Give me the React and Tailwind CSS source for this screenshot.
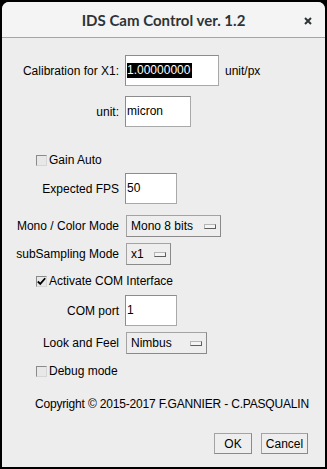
import React from "react";

const FONT = { fontFamily: '"Liberation Sans", Arial, sans-serif' };

function Field({ value, width, selected }) {
  return (
    <div
      className="h-[31px] bg-white border border-[#a9a9a9] border-t-[#8c8c8c] border-l-[#8c8c8c] flex items-center pl-[1px]"
      style={{ width }}
    >
      {selected ? (
        <span className="bg-black text-white leading-[15px] pr-[2px]">{value}</span>
      ) : (
        <span className="leading-[15px]">{value}</span>
      )}
    </div>
  );
}

function Combo({ value, width }) {
  return (
    <div
      className="h-[22px] bg-[#eeeeee] border border-[#a3a3a3] border-b-[#8a8a8a] border-r-[#8a8a8a] flex items-center justify-between pl-[4px] pr-[4px]"
      style={{ width }}
    >
      <span>{value}</span>
      <div className="w-[12px] h-[5px] bg-[#f4f4f4] border border-[#b5b5b5] border-b-[#5e5e5e] border-r-[#5e5e5e]" />
    </div>
  );
}

function Check({ label, checked }) {
  return (
    <div className="h-[20px] flex items-center pl-[34px]">
      <div className="w-[11px] h-[11px] border border-[#8a8a8a] border-b-[#d6d6d6] border-r-[#d6d6d6] bg-[#e8e8e8] flex items-center justify-center">
        {checked && (
          <svg width="11" height="11" viewBox="0 0 11 11">
            <path d="M1 5.5 L4 8.5 L10 1.5" fill="none" stroke="#000" strokeWidth="2.2" />
          </svg>
        )}
      </div>
      <span className="ml-[2px]">{label}</span>
    </div>
  );
}

function Row({ label, children, className = "" }) {
  return (
    <div className={`flex items-center ${className}`}>
      <div className="w-[117px] text-right shrink-0">{label}</div>
      <div className="ml-[6px] flex items-center">{children}</div>
    </div>
  );
}

export default function App() {
  return (
    <div className="w-[327px] h-[469px] bg-black pt-[2px] pl-[2px]" style={FONT}>
      <div className="w-[323px] h-[465px] bg-[#ededed] rounded-t-[7px] flex flex-col overflow-hidden text-[12px] text-black">
        {/* title bar */}
        <div className="h-[36px] bg-[#f4f4f4] border-b border-[#a6a6a1] flex items-center relative shrink-0">
          <div
            className="w-full text-center text-[15px] font-bold text-[#2e3436] pt-[1px]"
            style={{ fontFamily: 'Lato, "Liberation Sans", sans-serif' }}
          >
            IDS Cam Control ver. 1.2
          </div>
          <svg className="absolute right-[13px] top-[15px]" width="8" height="8" viewBox="0 0 8 8">
            <path d="M1 1 L7 7 M7 1 L1 7" stroke="#2e3436" strokeWidth="2" />
          </svg>
        </div>

        <Row label="Calibration for X1:" className="mt-[17px]">
          <Field value="1.00000000" width={94} selected />
          <span className="ml-[6px]">unit/px</span>
        </Row>

        <Row label="unit:" className="mt-[10px]">
          <Field value="micron" width={66} />
        </Row>

        <div className="mt-[23px]">
          <Check label="Gain Auto" />
        </div>

        <Row label="Expected FPS" className="mt-[3px]">
          <Field value="50" width={52} />
        </Row>

        <Row label="Mono / Color Mode" className="mt-[11px]">
          <div className="ml-[1px]">
            <Combo value="Mono 8 bits" width={95} />
          </div>
        </Row>

        <Row label="subSampling Mode" className="mt-[6px]">
          <div className="ml-[1px]">
            <Combo value="x1" width={45} />
          </div>
        </Row>

        <div className="mt-[6px]">
          <Check label="Activate COM Interface" checked />
        </div>

        <Row label="COM port" className="mt-[4px]">
          <Field value="1" width={52} />
        </Row>

        <Row label="Look and Feel" className="mt-[6px]">
          <div className="ml-[1px]">
            <Combo value="Nimbus" width={81} />
          </div>
        </Row>

        <div className="mt-[7px]">
          <Check label="Debug mode" />
        </div>

        <div className="mt-[15px] h-[16px] pl-[33px] flex items-center tracking-[-0.18px]">
          Copyright © 2015-2017 F.GANNIER - C.PASQUALIN
        </div>

        <div className="mt-[21px] flex justify-end gap-[9px] pr-[17px]">
          <button className="w-[38px] h-[21px] bg-[#eeeeee] border border-[#a3a3a3] border-b-[#8a8a8a] border-r-[#8a8a8a] text-[12px]">
            OK
          </button>
          <button className="w-[47px] h-[21px] bg-[#eeeeee] border border-[#a3a3a3] border-b-[#8a8a8a] border-r-[#8a8a8a] text-[12px]">
            Cancel
          </button>
        </div>
      </div>
    </div>
  );
}
